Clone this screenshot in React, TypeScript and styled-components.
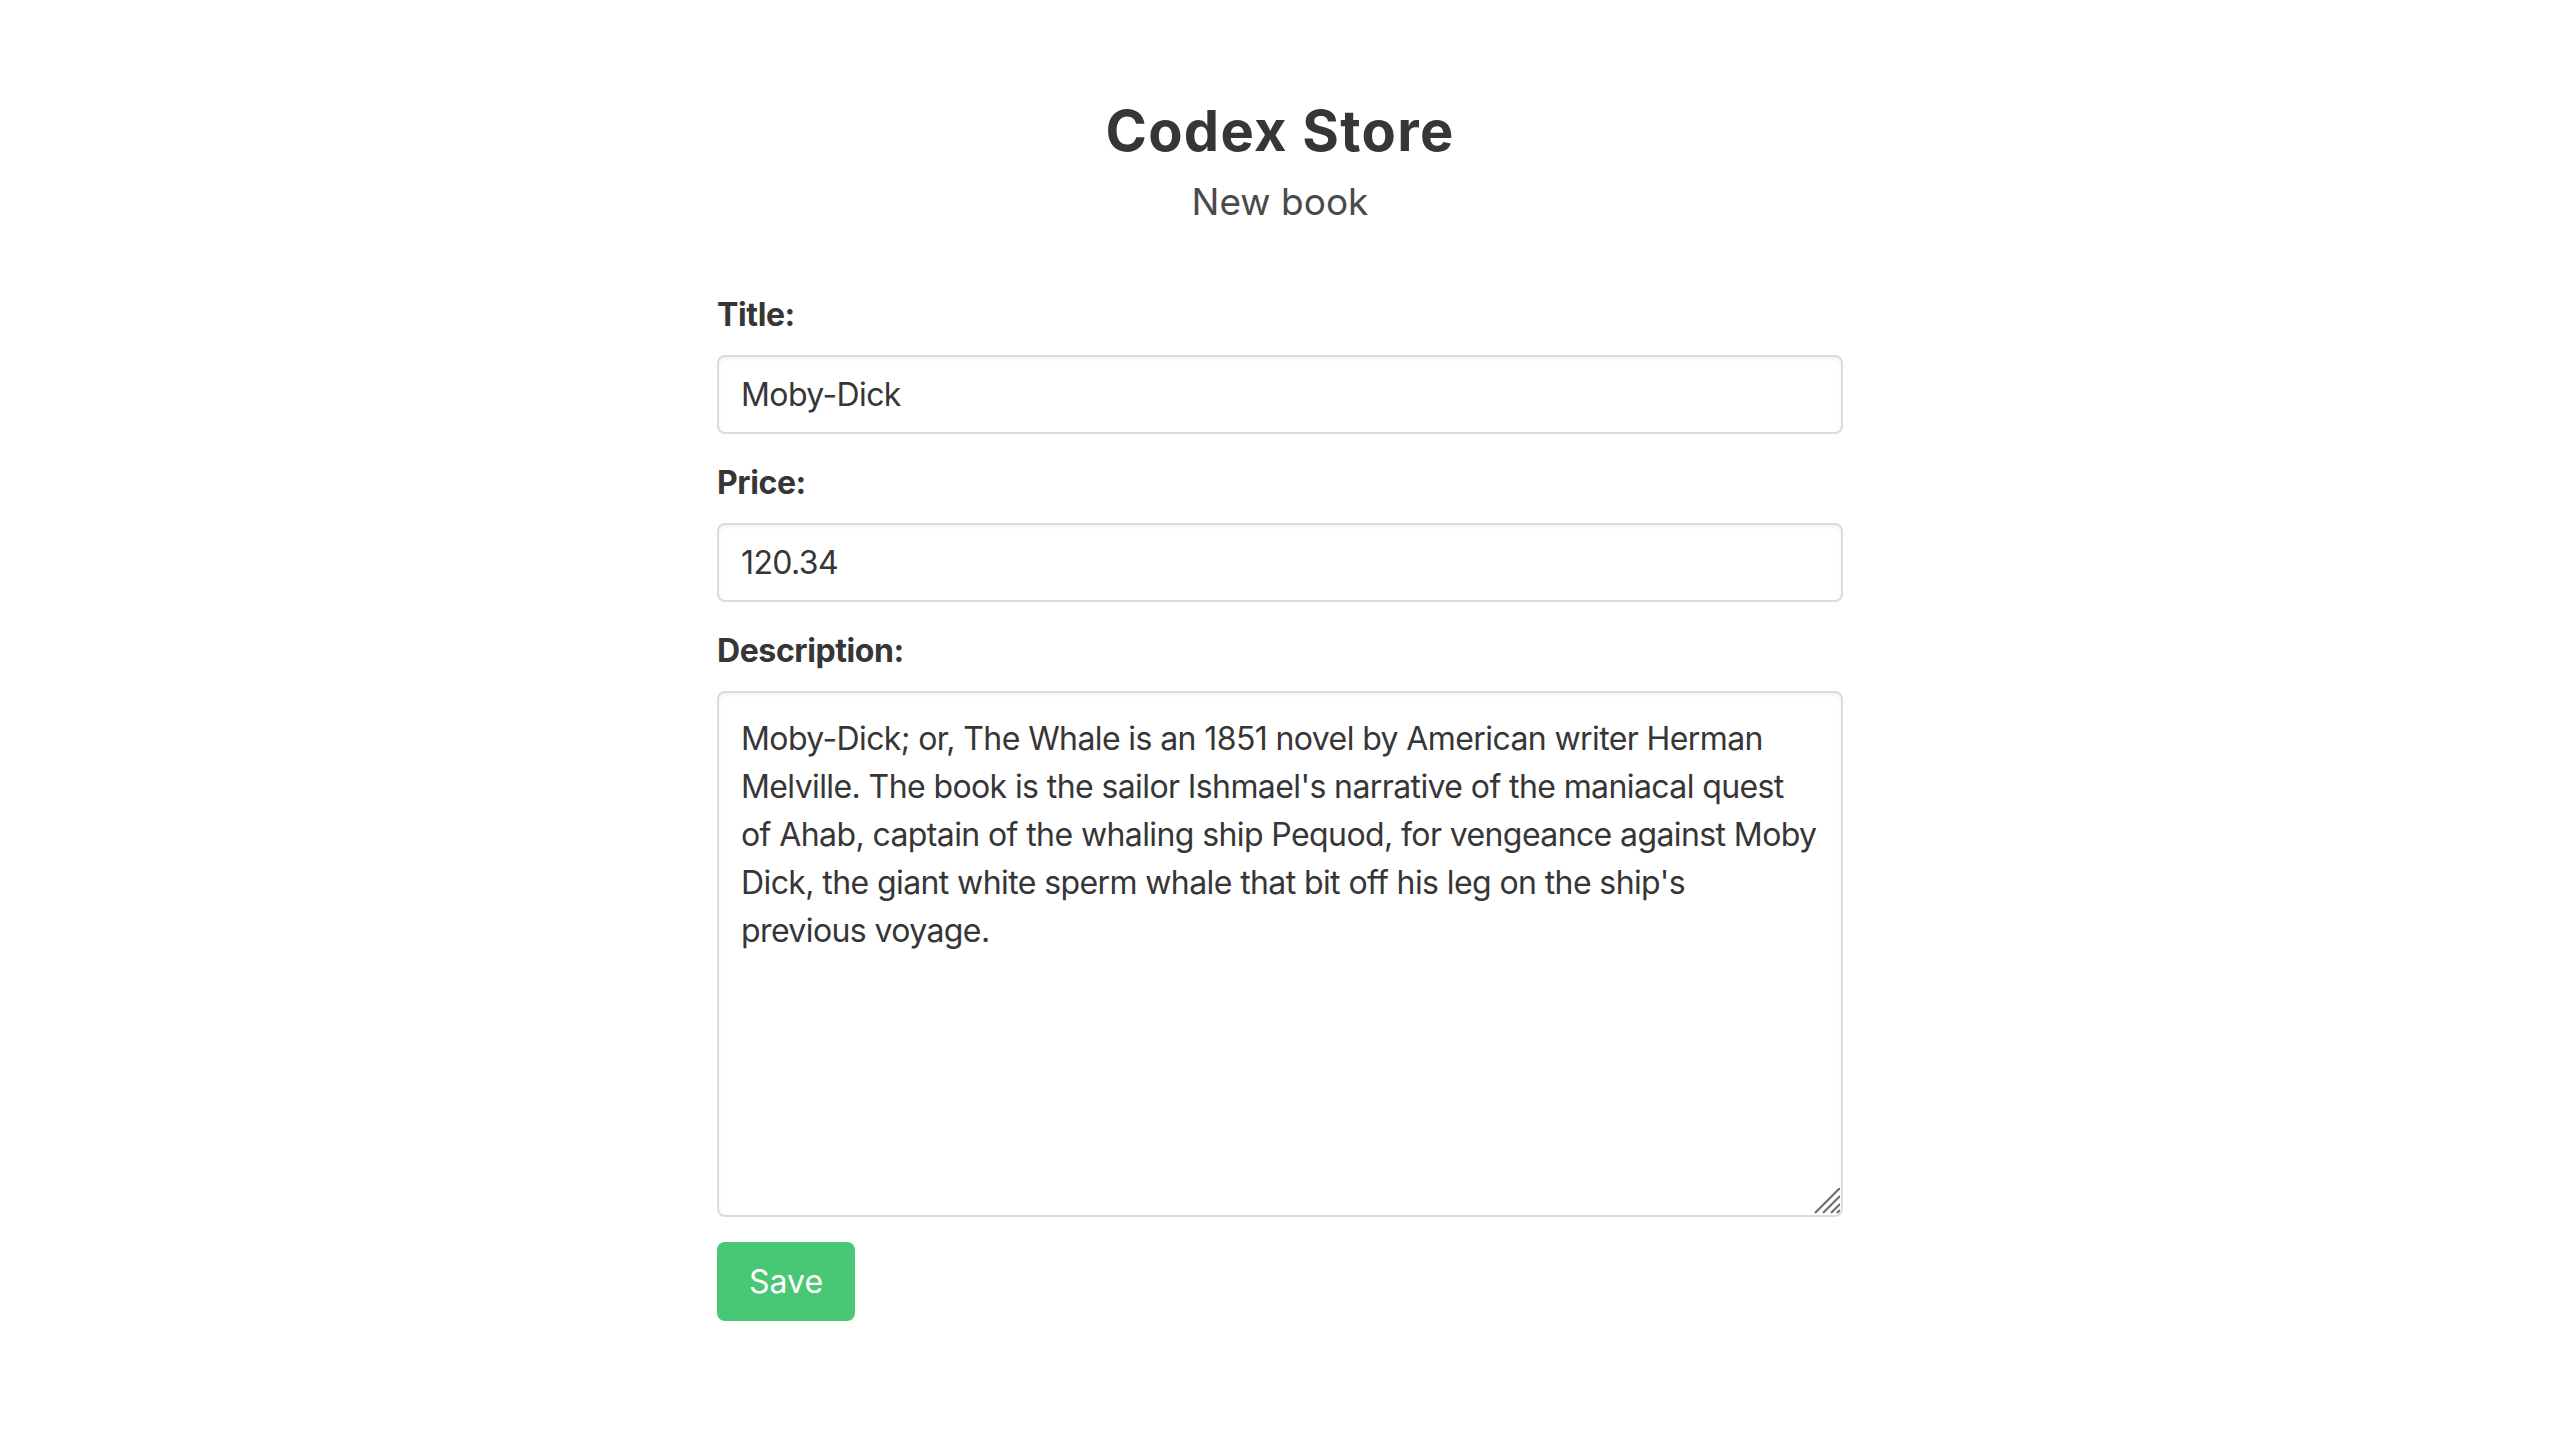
import styled, { createGlobalStyle } from "styled-components";

const GlobalStyle = createGlobalStyle`
  html, body {
    margin: 0;
    padding: 0;
    background: #ffffff;
  }
  body {
    font-family: "Inter", "Roboto", "Liberation Sans", sans-serif;
    color: #4a4a4a;
  }
`;

const Page = styled.main`
  width: 1126px;
  margin: 0 auto;
  padding-top: 100px;
`;

const Header = styled.header`
  display: flex;
  flex-direction: column;
  align-items: center;
  gap: 17px;
  margin-bottom: 66px;
`;

const Title = styled.h1`
  margin: 0;
  font-size: 56px;
  line-height: 62px;
  font-weight: 700;
  letter-spacing: 1.3px;
  color: #363636;
`;

const Subtitle = styled.h2`
  margin: 0;
  font-size: 37px;
  line-height: 46px;
  font-weight: 400;
  color: #4a4a4a;
`;

const Form = styled.form`
  display: flex;
  flex-direction: column;
  gap: 25px;
  align-items: flex-start;
`;

const Field = styled.div`
  display: flex;
  flex-direction: column;
  gap: 16px;
  width: 100%;
`;

const Label = styled.label`
  font-size: 32px;
  line-height: 48px;
  font-weight: 700;
  letter-spacing: -0.4px;
  color: #363636;
`;

const controlStyles = `
  box-sizing: border-box;
  width: 100%;
  margin: 0;
  border: 2px solid #dbdbdb;
  border-radius: 8px;
  background: #ffffff;
  box-shadow: inset 0 2px 4px rgba(10, 10, 10, 0.05);
  font-family: "Inter", "Roboto", "Liberation Sans", sans-serif;
  font-size: 32px;
  line-height: 48px;
  letter-spacing: -0.6px;
  color: #363636;
  outline: none;
`;

const TextInput = styled.input`
  ${controlStyles}
  height: 79px;
  padding: 13px 22px;
`;

const AreaWrap = styled.div`
  position: relative;
  width: 100%;
`;

const TextArea = styled.textarea<{ $height: number }>`
  ${controlStyles}
  display: block;
  height: ${(p) => p.$height}px;
  padding: 22px 16px 22px 22px;
  resize: none;
`;

const Grip = styled.svg`
  position: absolute;
  right: 3px;
  bottom: 3px;
  width: 26px;
  height: 26px;
  pointer-events: none;
`;

const SaveButton = styled.button`
  box-sizing: border-box;
  height: 79px;
  padding: 0 30px;
  border: 2px solid transparent;
  border-radius: 8px;
  background: #48c774;
  color: #ffffff;
  font-family: "Inter", "Roboto", "Liberation Sans", sans-serif;
  font-size: 32px;
  line-height: 48px;
  cursor: pointer;
`;

// line breaks kept where the original textarea wrapped
const description = [
  "Moby-Dick; or, The Whale is an 1851 novel by American writer Herman",
  "Melville. The book is the sailor Ishmael's narrative of the maniacal quest",
  "of Ahab, captain of the whaling ship Pequod, for vengeance against Moby",
  "Dick, the giant white sperm whale that bit off his leg on the ship's",
  "previous voyage.",
].join("\n");

export default function App() {
  return (
    <>
      <GlobalStyle />
      <Page>
        <Header>
          <Title>Codex Store</Title>
          <Subtitle>New book</Subtitle>
        </Header>
        <Form onSubmit={(e) => e.preventDefault()}>
          <Field>
            <Label htmlFor="title">Title:</Label>
            <TextInput id="title" type="text" defaultValue="Moby-Dick" />
          </Field>
          <Field>
            <Label htmlFor="price">Price:</Label>
            <TextInput id="price" type="text" defaultValue="120.34" />
          </Field>
          <Field>
            <Label htmlFor="description">Description:</Label>
            <AreaWrap>
              <TextArea id="description" $height={526} defaultValue={description} />
              <Grip viewBox="0 0 26 26" aria-hidden="true">
                <g stroke="#6e6e6e" strokeWidth="2.2" strokeLinecap="butt">
                  <line x1="1" y1="25" x2="26" y2="0" />
                  <line x1="9" y1="25" x2="26" y2="8" />
                  <line x1="17" y1="25" x2="26" y2="16" />
                  <line x1="23" y1="25" x2="26" y2="22" />
                </g>
              </Grip>
            </AreaWrap>
          </Field>
          <SaveButton type="submit">Save</SaveButton>
        </Form>
      </Page>
    </>
  );
}
